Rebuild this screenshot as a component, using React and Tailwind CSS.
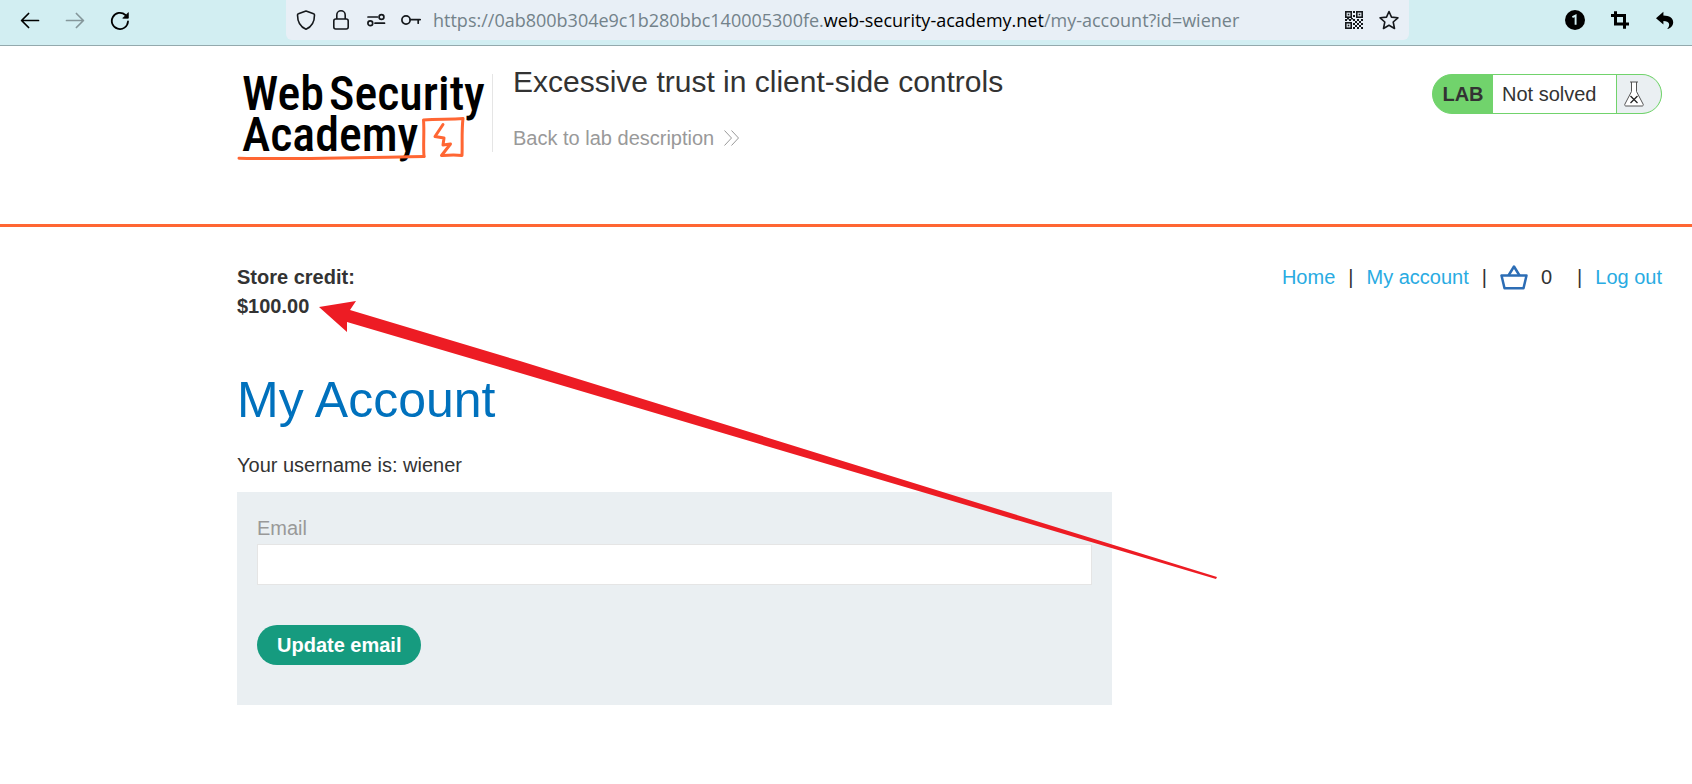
import React from "react";

function BackIcon() {
  return (
    <svg className="h-5 w-5" viewBox="0 0 20 20" fill="none" stroke="currentColor" strokeWidth="1.7" strokeLinecap="round" strokeLinejoin="round" aria-hidden="true">
      <path d="M18.5 10.500H1.600M8.600 3.500L1.600 10.500l7 7" />
    </svg>
  );
}

function ForwardIcon() {
  return (
    <svg className="h-5 w-5" viewBox="0 0 20 20" fill="none" stroke="currentColor" strokeWidth="1.7" strokeLinecap="round" strokeLinejoin="round" aria-hidden="true">
      <path d="M1.500 10.500h16.900M11.400 3.500l7 7-7 7" />
    </svg>
  );
}

function ReloadIcon() {
  return (
    <svg className="h-5 w-5" viewBox="0 0 20 20" fill="none" stroke="currentColor" strokeWidth="1.8" strokeLinecap="round" strokeLinejoin="round" aria-hidden="true">
      <path d="M18 11.500a8.100 8.100 0 1 1-2.600-6.500" />
      <path d="M18.300 3v5.200h-5.200z" fill="currentColor" strokeWidth="0.8" />
    </svg>
  );
}

function ShieldIcon() {
  return (
    <svg className="h-5 w-5" viewBox="0 0 20 20" fill="none" stroke="currentColor" strokeWidth="1.6" strokeLinejoin="round" aria-hidden="true">
      <path d="M10 1L17.6 3.8c.6.2.9.6.9 1.2C18.5 11.500 15.500 17 10 19.200 4.500 17 1.500 11.500 1.500 5c0-.6.3-1 .9-1.200z" />
    </svg>
  );
}

function LockIcon() {
  return (
    <svg className="h-5 w-5" viewBox="0 0 20 20" fill="none" stroke="currentColor" strokeWidth="1.6" aria-hidden="true">
      <rect x="2.8" y="9" width="14.400" height="10" rx="2" />
      <path d="M5.800 9V5a4.200 4.200 0 0 1 8.400 0v4" />
    </svg>
  );
}

function PermissionsIcon() {
  return (
    <svg className="h-5 w-5" viewBox="0 0 20 20" fill="none" stroke="currentColor" strokeWidth="1.7" strokeLinecap="round" aria-hidden="true">
      <path d="M2 7h9.500M9 13.200h9.500" />
      <circle cx="15.500" cy="7" r="2.400" />
      <circle cx="4.300" cy="13.200" r="2.400" />
    </svg>
  );
}

function KeyIcon() {
  return (
    <svg className="h-5 w-5" viewBox="0 0 20 20" fill="none" stroke="currentColor" strokeWidth="1.7" strokeLinecap="round" aria-hidden="true">
      <circle cx="5" cy="10" r="4.100" />
      <path d="M9.200 9.600h10M17.200 9.800v3.400" />
    </svg>
  );
}

function QrIcon() {
  return (
    <svg className="h-5 w-5" viewBox="0 0 20 20" fill="none" stroke="currentColor" strokeWidth="1.600" aria-hidden="true">
      <rect x="1.800" y="1.800" width="5.400" height="5.400" />
      <rect x="12.800" y="1.800" width="5.400" height="5.400" />
      <rect x="1.800" y="12.800" width="5.400" height="5.400" />
      <g fill="currentColor" stroke="none">
        <rect x="3.700" y="3.700" width="1.600" height="1.600" />
        <rect x="14.700" y="3.700" width="1.600" height="1.600" />
        <rect x="3.700" y="14.700" width="1.600" height="1.600" />
        <path d="M9 1h2v2H9zM9 5h2v2H9zM1 9h2v2H1zM5 9h2v2H5zM9 9h2v2H9zM13 9h2v2h-2zM17 9h2v2h-2zM3 8h2v1.500H3zM7 8h2v1.500H7zM11 11h2v2h-2zM15 11h2v2h-2zM9 13h2v2H9zM13 13h2v2h-2zM17 13h2v2h-2zM11 15h2v2h-2zM15 15h2v2h-2zM9 17h2v2H9zM13 17h2v2h-2zM17 17h2v2h-2z" />
      </g>
    </svg>
  );
}

function StarIcon() {
  return (
    <svg className="h-5 w-5" viewBox="0 0 20 20" fill="none" stroke="currentColor" strokeWidth="1.600" strokeLinejoin="round" aria-hidden="true">
      <path d="M10 1.500l2.500 5.600 6.400.7-4.700 4.200 1.300 6.500L10 15.300 4.500 18.500l1.300-6.500L1.100 7.800l6.400-.7z" />
    </svg>
  );
}

function BadgeOneIcon() {
  return (
    <svg className="h-5 w-5" viewBox="0 0 20 20" aria-hidden="true">
      <circle cx="10" cy="10" r="10" fill="currentColor" />
      <path d="M7.400 7.200L10.600 5.600V14.800" fill="none" stroke="#d2eef2" strokeWidth="1.900" />
    </svg>
  );
}

function CropIcon() {
  return (
    <svg className="h-5 w-5" viewBox="0 0 20 20" fill="none" stroke="currentColor" strokeWidth="3" aria-hidden="true">
      <path d="M5.500 1.200V14h13.500M1 5.500h13.500V18.800" />
    </svg>
  );
}

function UndoIcon() {
  return (
    <svg className="h-5 w-5" viewBox="0 0 20 20" fill="currentColor" aria-hidden="true">
      <path d="M1 8.200L8.400 1.800v3.800c6 .1 9.800 2.300 9.800 7 0 2.500-1.500 4.800-4.600 6.200-.8.300-1.500 0-.9-.6 2.600-3 2.200-7.300-4.300-7.300v3.700z" />
    </svg>
  );
}

function BrowserBar() {
  return (
    <header className="flex h-[46px] items-start border-b border-[#93a9ad] bg-[#d2eef2]">
      <div className="flex h-10 w-[286px] shrink-0 items-center gap-[25px] pl-5">
        <button type="button" aria-label="Back" className="text-black"><BackIcon /></button>
        <button type="button" aria-label="Forward" className="text-[#85979b]"><ForwardIcon /></button>
        <button type="button" aria-label="Reload" className="text-black"><ReloadIcon /></button>
      </div>
      <div className="flex h-10 min-w-0 flex-1 items-center rounded-b-md bg-[#e8eff6] px-[10px] text-[#15181c]">
        <div className="flex shrink-0 gap-[15px]">
          <ShieldIcon />
          <LockIcon />
          <PermissionsIcon />
          <KeyIcon />
        </div>
        <p className="ml-3 flex-1 truncate font-['Open_Sans','Noto_Sans',sans-serif] text-[18px] leading-6 text-[#73828a]">
          https://0ab800b304e9c1b280bbc140005300fe.<span className="text-black">web-security-academy.net</span>/my-account?id=wiener
        </p>
        <div className="flex shrink-0 gap-[15px]">
          <button type="button" aria-label="QR code"><QrIcon /></button>
          <button type="button" aria-label="Bookmark"><StarIcon /></button>
        </div>
      </div>
      <div className="flex h-10 w-[283px] shrink-0 items-center justify-end gap-[25px] pr-[17px] text-black">
        <button type="button" aria-label="Notifications"><BadgeOneIcon /></button>
        <button type="button" aria-label="Capture"><CropIcon /></button>
        <button type="button" aria-label="Undo"><UndoIcon /></button>
      </div>
    </header>
  );
}

function AcademyLogo() {
  return (
    <svg className="h-[94px] w-[255px] shrink-0" viewBox="0 0 255 94" role="img" aria-label="Web Security Academy">
      <g className="font-['Roboto_Condensed',Roboto,sans-serif] text-[48px] font-medium" fill="#000">
        <text x="5" y="40">Web</text>
        <text x="92" y="40">Security</text>
        <text x="5" y="81">Academy</text>
      </g>
      <g fill="none" stroke="#ff6633" strokeLinecap="round" strokeLinejoin="round">
        <path d="M2 88.300C60 89.500 130 87.500 187 86.500" strokeWidth="3" />
        <path d="M187 86.500C186 74 187.500 62 186.500 50C200 48.500 213 49.800 226 48.500C224.500 61 225.500 73 225 85.500C218 84.500 211 85 205.500 85.500" strokeWidth="3" />
        <path d="M206 54.500L198 66.500L207 68L206 75L213.500 74L204.500 85.500" strokeWidth="3" />
      </g>
    </svg>
  );
}

function FlaskIcon() {
  return (
    <svg className="h-[26px] w-5" viewBox="0 0 20 26" fill="none" aria-hidden="true">
      <path d="M6 1h8M7.500 1v9.500L.8 23.300c-.3 1 .1 1.700 1.200 1.700h16c1.100 0 1.500-.7 1.200-1.700L12.500 10.500V1" fill="#fff" stroke="#555" strokeWidth="1" />
      <path d="M6.500 15l7 7M13.500 15l-7 7" stroke="#222" strokeWidth="1.300" />
    </svg>
  );
}

function LabHeader() {
  return (
    <section className="flex h-[181px] items-start border-b-[3px] border-[#ff6633] pt-6 pr-[30px] pl-[237px]">
      <AcademyLogo />
      <div className="mt-1 h-[78px] w-px shrink-0 bg-[#e5e5e5]" />
      <div className="-mt-[6px] ml-5 flex-1">
        <h2 className="text-[30px] leading-9">Excessive trust in client-side controls</h2>
        <a href="#description" className="mt-6 inline-flex items-center gap-[10px] text-[#999]">
          Back to lab description
          <svg className="h-4 w-[15px]" viewBox="0 0 15 16" fill="none" stroke="#999" strokeWidth="1" aria-hidden="true">
            <path d="M.5.500L7.500 8l-7 7.500M7.500.500L14.500 8l-7 7.500" />
          </svg>
        </a>
      </div>
      <div className="mt-1 flex h-10 w-[230px] shrink-0 overflow-hidden rounded-full border border-[#71d36c] bg-[#71d36c]">
        <p className="flex w-[60px] items-center justify-center font-bold">LAB</p>
        <p className="flex flex-1 items-center border-r border-[#71d36c] bg-white pl-[9px]">Not solved</p>
        <span className="flex w-11 items-center bg-[#eaeff2] pl-[7px]"><FlaskIcon /></span>
      </div>
    </section>
  );
}

function BasketIcon() {
  return (
    <svg className="h-[26px] w-7" viewBox="0 0 28 26" fill="none" stroke="#2c6db5" strokeWidth="2.500" strokeLinejoin="round" aria-hidden="true">
      <path d="M1.500 11.500h25L23.500 24.200H4.500z" />
      <path d="M8.500 11.500L14 2.500l5.500 9" />
    </svg>
  );
}

function AccountPage() {
  return (
    <main className="relative pt-9 pr-[30px] pl-[237px]">
      <div className="flex items-start justify-between">
        <p className="font-bold leading-[29px]">
          Store credit:<br />$100.00
        </p>
        <nav className="flex h-7 items-center text-[#29abe2]">
          <a href="#home">Home</a>
          <span className="mx-[13px] text-[#333]">|</span>
          <a href="#account">My account</a>
          <span className="mx-[13px] text-[#333]">|</span>
          <a href="#cart" aria-label="Basket"><BasketIcon /></a>
          <span className="ml-[13px] text-[#333]">0</span>
          <span className="mr-[13px] ml-[25px] text-[#333]">|</span>
          <a href="#logout">Log out</a>
        </nav>
      </div>
      <h1 className="mt-[49px] text-[50px] leading-[60px] text-[#0071bd]">My Account</h1>
      <p className="mt-[21px] leading-[29px]">Your username is: wiener</p>
      <form className="mt-3 w-[875px] max-w-full bg-[#eaeff2] px-5 pt-5 pb-10" onSubmit={(e) => e.preventDefault()}>
        <label htmlFor="email" className="block leading-8 text-[#999]">Email</label>
        <input id="email" type="email" className="block h-[41px] w-full border border-[#e5e5e5] bg-white px-3 outline-none" />
        <button type="submit" className="mt-10 h-10 rounded-full bg-[#169b7f] px-5 font-bold text-white">Update email</button>
      </form>
      <svg className="pointer-events-none absolute top-[70px] left-[319px] h-[285px] w-[900px]" viewBox="0 0 900 285" aria-hidden="true">
        <path d="M0 10L37 4L31 13L201 64L898 280L897 282L201 76L28 25V35z" fill="#ed1c24" />
      </svg>
    </main>
  );
}

export default function App() {
  return (
    <div className="min-h-screen overflow-x-hidden bg-white font-['Liberation_Sans',Arial,sans-serif] text-[20px] leading-7 text-[#333]">
      <BrowserBar />
      <LabHeader />
      <AccountPage />
    </div>
  );
}
